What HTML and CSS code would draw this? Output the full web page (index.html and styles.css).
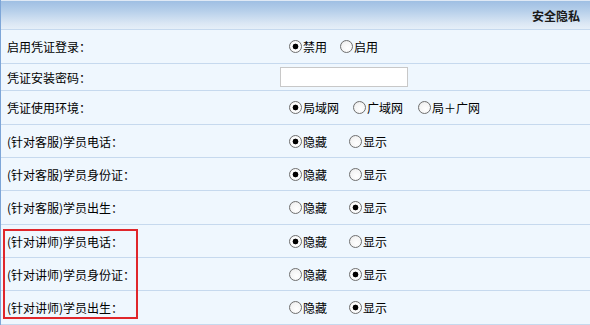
FILE: index.html
```html
<!DOCTYPE html>
<html lang="zh-CN">
<head>
<meta charset="utf-8">
<title>安全隐私</title>
<link rel="stylesheet" href="styles.css">
</head>
<body>
<div class="panel">
  <div class="head">安全隐私</div>
  <div class="row r33">
    <div class="label">启用凭证登录：</div>
    <div class="value">
      <label class="opt"><input type="radio" name="a" checked><span>禁用</span></label>
      <label class="opt g13"><input type="radio" name="a"><span>启用</span></label>
    </div>
  </div>
  <div class="row r26">
    <div class="label">凭证安装密码：</div>
    <div class="value"><input class="pwd" type="text"></div>
  </div>
  <div class="row r33">
    <div class="label">凭证使用环境：</div>
    <div class="value">
      <label class="opt"><input type="radio" name="c" checked><span>局域网</span></label>
      <label class="opt g14"><input type="radio" name="c"><span>广域网</span></label>
      <label class="opt g16"><input type="radio" name="c"><span>局＋广网</span></label>
    </div>
  </div>
  <div class="row r32">
    <div class="label">(针对客服)学员电话：</div>
    <div class="value">
      <label class="opt"><input type="radio" name="d" checked><span>隐藏</span></label>
      <label class="opt g22"><input type="radio" name="d"><span>显示</span></label>
    </div>
  </div>
  <div class="row r32">
    <div class="label">(针对客服)学员身份证：</div>
    <div class="value">
      <label class="opt"><input type="radio" name="e" checked><span>隐藏</span></label>
      <label class="opt g22"><input type="radio" name="e"><span>显示</span></label>
    </div>
  </div>
  <div class="row r33">
    <div class="label">(针对客服)学员出生：</div>
    <div class="value">
      <label class="opt"><input type="radio" name="f"><span>隐藏</span></label>
      <label class="opt g22"><input type="radio" name="f" checked><span>显示</span></label>
    </div>
  </div>
  <div class="row r32">
    <div class="label">(针对讲师)学员电话：</div>
    <div class="value">
      <label class="opt"><input type="radio" name="g" checked><span>隐藏</span></label>
      <label class="opt g22"><input type="radio" name="g"><span>显示</span></label>
    </div>
  </div>
  <div class="row r32">
    <div class="label">(针对讲师)学员身份证：</div>
    <div class="value">
      <label class="opt"><input type="radio" name="h"><span>隐藏</span></label>
      <label class="opt g22"><input type="radio" name="h" checked><span>显示</span></label>
    </div>
  </div>
  <div class="row r33">
    <div class="label">(针对讲师)学员出生：</div>
    <div class="value">
      <label class="opt"><input type="radio" name="i"><span>隐藏</span></label>
      <label class="opt g22"><input type="radio" name="i" checked><span>显示</span></label>
    </div>
  </div>
  <div class="mark"></div>
</div>
</body>
</html>
```
FILE: styles.css
```css
html, body {
  margin: 0;
  padding: 0;
  background: #eff7fe;
}
.panel {
  position: relative;
  width: 589px;
  height: 325px;
  border-left: 1px solid #7ea6d8;
  background: #eff7fe;
  font-family: "Noto Sans CJK SC", "Liberation Sans", sans-serif;
  font-size: 12px;
  color: #000;
}
.head {
  height: 29px;
  box-sizing: border-box;
  border-top: 1px solid #dfe9f5;
  background: linear-gradient(to bottom, #9fbfe3 0%, #b6cfea 35%, #dbe7f4 80%, #e6eff8 100%);
  border-bottom: 1px solid #c6d9ee;
  height: 30px;
  display: flex;
  align-items: center;
  justify-content: flex-end;
  padding-right: 10px;
  font-weight: bold;
  color: #1a1a1a;
}
.row {
  display: flex;
  align-items: center;
  border-bottom: 1px solid #c6d9ee;
}
.r33 { height: 33px; }
.r32 { height: 32px; }
.r26 { height: 26px; }
.label {
  width: 273px;
  padding-left: 6px;
  white-space: nowrap;
}
.value {
  display: flex;
  align-items: center;
}
.opt {
  display: flex;
  align-items: center;
}
.opt:first-child { margin-left: 9px; }
.g13 { margin-left: 13px; }
.g14 { margin-left: 14px; }
.g16 { margin-left: 15px; }
.g22 { margin-left: 22px; }
.opt input {
  -webkit-appearance: none;
  appearance: none;
  margin: 0 1px 0 0;
  width: 13px;
  height: 13px;
  box-sizing: border-box;
  border: 1px solid #6f6f6f;
  border-radius: 50%;
  background: radial-gradient(circle at 60% 65%, #ffffff 0%, #f4f4f4 60%, #dcdcdc 100%);
  position: relative;
}
.opt input:checked {
  background: radial-gradient(circle, #000 0, #000 2.6px, #fff 3.2px, #f2f2f2 100%);
}
.pwd {
  width: 128px;
  height: 20px;
  box-sizing: border-box;
  margin: 0;
  border: 1px solid #c8c8c8;
  background: #fff;
  padding: 0 2px;
}
.mark {
  position: absolute;
  left: 2px;
  top: 229px;
  width: 131px;
  height: 86px;
  border: 2px solid #e0262b;
}
```
